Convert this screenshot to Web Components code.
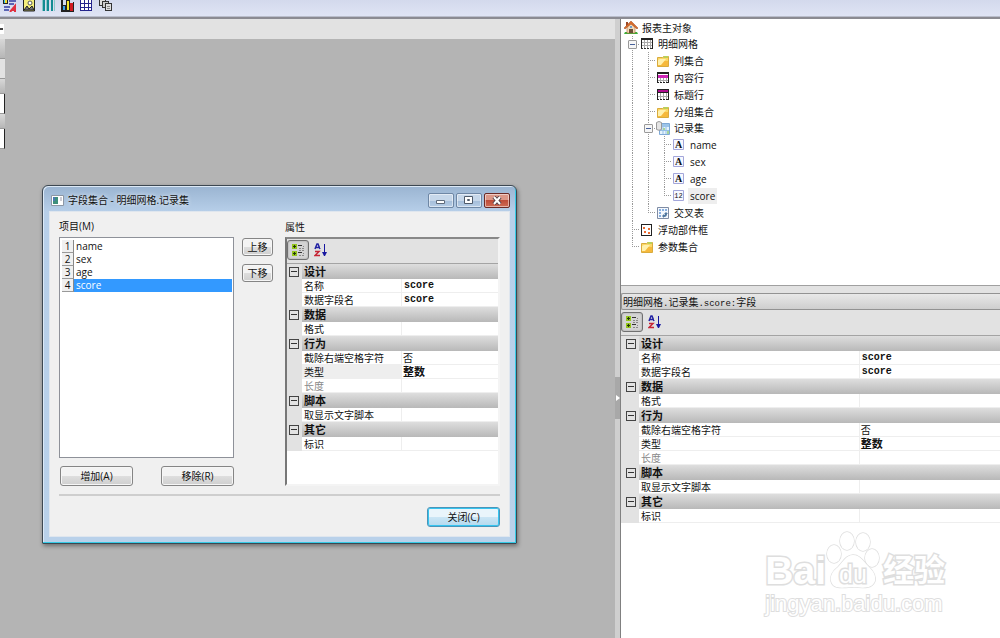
<!DOCTYPE html>
<html lang="zh-CN">
<head>
<meta charset="utf-8">
<title>报表设计器</title>
<style>
  html, body {
    height: 100%;
    margin: 0;
  }
  body {
    font: 10px/14px "Open Sans", "Noto Sans CJK SC", sans-serif;
    color: #111;
    overflow: hidden;
  }
</style>
</head>
<body>
<report-designer>
  <tool-strip slot="toolbar"></tool-strip>
  <design-canvas slot="canvas">
    <app-dialog heading="字段集合 - 明细网格.记录集">
      <item-list slot="items" heading="项目(M)"></item-list>
      <push-button slot="order">上移</push-button>
      <push-button slot="order">下移</push-button>
      <push-button slot="edit" wide>增加(A)</push-button>
      <push-button slot="edit" wide>移除(R)</push-button>
      <property-grid slot="properties" active="类型"></property-grid>
      <push-button slot="footer" wide primary>关闭(C)</push-button>
    </app-dialog>
  </design-canvas>
  <object-tree slot="tree"></object-tree>
  <property-grid slot="properties"></property-grid>
  <site-mark slot="mark"></site-mark>
</report-designer>

<script>
const define = (name, html, setup) => {
  customElements.define(name, class extends HTMLElement {
    connectedCallback() {
      if (this.shadowRoot) return;
      this.attachShadow({ mode: 'open' });
      this.shadowRoot.innerHTML = html;
      if (setup) setup(this, this.shadowRoot);
    }
  });
};

const icons = {
  home: `<svg width="14" height="14" viewBox="0 0 14 14"><path d="M1 11h12l1 2H0z" fill="#3fae3a"/><path d="M3 6l4-4 4 4v6H3z" fill="#f3d9b8" stroke="#a86b3a" stroke-width=".6"/><path d="M2 1h2v4H2z" fill="#9a4a28"/><path d="M0 7l7-7 7 7-1 1-6-5-6 5z" fill="#d96b2c" stroke="#9c4a1c" stroke-width=".5"/><path d="M5 8h4v4H5z" fill="#6d5037"/><path d="M6 5h2v2H6z" fill="#6fa0cc"/></svg>`,
  grid: `<svg width="14" height="14" viewBox="0 0 14 14" shape-rendering="crispEdges"><path d="M1 2h12v10H1z" fill="#fff"/><path d="M1 1h12v2H1zM1 3h1v9H1zM12 3h1v9h-1z" fill="#222"/><path d="M2 5.500h10M2 8.500h10M4.500 3v9M7.500 3v9M10.500 3v9" stroke="#aaa"/><path d="M1 11.500h12" stroke="#333" stroke-dasharray="2 1"/></svg>`,
  folder: `<svg width="14" height="14" viewBox="0 0 14 14"><path d="M1.500 12.500v-9h5l1-1h5v10z" fill="#fbd766" stroke="#d9ab3d"/><path d="M2 12l2-5h8v5z" fill="#f6b93c"/><path d="M4 5h6l-5 6H2V6z" fill="#fff1ad"/><path d="M8 2h4v2H7z" fill="#b9cf5a"/></svg>`,
  content: `<svg width="14" height="14" viewBox="0 0 14 14" shape-rendering="crispEdges"><path d="M1 1h12v11H1z" fill="#fff"/><path d="M1 1h12v2H1zM1 3h1v9H1zM12 3h1v9h-1z" fill="#222"/><path d="M2 4h10v3H2z" fill="#d026b8"/><path d="M2 9.500h10M4.500 7v5M7.500 7v5M10.500 7v5" stroke="#aaa"/><path d="M1 11.500h12" stroke="#222" stroke-dasharray="2 1"/></svg>`,
  title: `<svg width="14" height="14" viewBox="0 0 14 14" shape-rendering="crispEdges"><path d="M1 1h12v11H1z" fill="#fff"/><path d="M1 1h12v1H1zM1 2h1v10H1zM12 2h1v10h-1zM1 4h12v1H1z" fill="#222"/><path d="M2 2h10v2H2z" fill="#b00c91"/><path d="M2 8.500h10M4.500 5v7M7.500 5v7M10.500 5v7" stroke="#aaa"/><path d="M1 11.500h12" stroke="#222" stroke-dasharray="2 1"/></svg>`,
  records: `<svg width="14" height="14" viewBox="0 0 14 14"><path d="M3.500 2.500h10v11h-10z" fill="#e6f3fc" stroke="#7ea9d6"/><path d="M4 3h9v3H4z" fill="#9cc4e8"/><path d="M7 6v7M10 6v7M4 9.500h9" stroke="#94bfe6"/><path d="M7 7h2v2H7zM11 10h2v3h-2z" fill="#a6d49a"/><path d="M.5 1.500q2.500-2 5 0v7q-2.500 1.500-5 0z" fill="#e4e4e4" stroke="#999"/></svg>`,
  text: `<svg width="14" height="14" viewBox="0 0 14 14"><path d="M1.500 1.500h10v10h-10z" fill="#f7f8ff" stroke="#a3a6da"/><text x="6.500" y="10" font-family="Liberation Serif, serif" font-size="10" font-weight="bold" text-anchor="middle" fill="#111">A</text></svg>`,
  number: `<svg width="14" height="14" viewBox="0 0 14 14"><path d="M1.500 1.500h10v10h-10z" fill="#f7f8ff" stroke="#a3a6da"/><text x="6.500" y="9" font-family="Liberation Mono, monospace" font-size="7" text-anchor="middle" fill="#111">12</text></svg>`,
  cross: `<svg width="14" height="14" viewBox="0 0 14 14"><path d="M1.500 1.500h11v11h-11z" fill="#f4f8fd" stroke="#7f8ca4"/><path d="M3 3h2v2H3zM6 3h2v2H6zM9 3h2v2H9zM3 6h2v2H3zM3 9h2v2H3z" fill="#87afe0"/><path d="M10 6l2 2h-1q0 3-3 3v1L6 10l2-2v1q1 0 1-1H8z" fill="#50779f"/></svg>`,
  float: `<svg width="14" height="14" viewBox="0 0 14 14" shape-rendering="crispEdges"><path d="M1.500 1.500h10v11h-10z" fill="#fff" stroke="#222"/><path d="M3 4h2v2H3zM4 8h2v2H4zM8 5h2v2H8zM8 9h2v2H8z" fill="#ee6a2f"/></svg>`,
  categories: `<svg width="14" height="14" viewBox="0 0 14 14" shape-rendering="crispEdges"><path d="M1 1h5v5H1zM1 8h5v5H1z" fill="#93c51c"/><path d="M3 2h1v3H3zM2 3h3v1H2zM3 9h1v3H3zM2 10h3v1H2z" fill="#23350a"/><path d="M7 2h4v1H7zM7 9h4v1H7z" fill="#333"/><path d="M8 5.500h2M11 5.500h2M8 7.500h2M11 7.500h2M8 12.500h2M11 12.500h2M12 3.500h1M12 10.500h1" stroke="#888"/></svg>`,
  sort: `<svg width="14" height="14" viewBox="0 0 14 14"><path d="M1 6l2-5h1l2 5M2 4.500h4" fill="none" stroke="#2424a4" stroke-width="1.500"/><path d="M1 8.500h4l-4 4h5" fill="none" stroke="#c52535" stroke-width="1.500"/><path d="M10 1h1v8h2l-2 4h-1L8 9h2z" fill="#1818a0"/></svg>`
};

// Top strip: the upper rows of its icons are clipped by the window
define('tool-strip', `
  <style>
    :host {
      display: flex;
      gap: 5px;
      padding-left: 3px;
      height: 16px;
      background: linear-gradient(#d3d9ec, #dfe4f4);
      border-bottom: 1px solid #b9bdcb;
    }
    button {
      border: 0;
      padding: 0;
      background: none;
      width: 14px;
      height: 12px;
      line-height: 0;
    }
    svg { display: block; }
    button:last-child { margin-left: 1px; }
  </style>
  <button aria-label="文本"><svg width="14" height="12" shape-rendering="crispEdges"><path d="M0 0h5v4H0z" fill="#222"/><path d="M1 0h1v3H1z" fill="#34c5ee"/><path d="M2 0h2v3H2z" fill="#f3de30"/><path d="M6 1h7M6 4h5M1 7h6M1 10h5" stroke="#5b64b4" stroke-width="2"/><path d="M7 12l5-6v6M9 10h3" fill="none" stroke="#e03040" stroke-width="2" shape-rendering="auto"/></svg></button>
  <button aria-label="图片"><svg width="14" height="12"><path d="M1.500-1v12h11V-1z" fill="#f4ee7c" stroke="#222"/><path d="M2 10l3-4 2 3 3-3 2 4z" fill="#777" stroke="#222"/><circle cx="8" cy="3" r="2" fill="#fff" stroke="#555"/></svg></button>
  <button aria-label="条码"><svg width="14" height="12" shape-rendering="crispEdges"><path d="M3 0v11M7 0v11M11 0v11" stroke="#128a93" stroke-width="2"/><path d="M5 0v11M13 0v11M1 0v11" stroke="#8ac8c8"/></svg></button>
  <button aria-label="图表"><svg width="14" height="12" shape-rendering="crispEdges"><path d="M1 0h2v12H1z" fill="#222"/><path d="M2.500 5.500h3v5h-3z" fill="#38a0ee" stroke="#222"/><path d="M6.500.5h3v10h-3z" fill="#f6e62d" stroke="#222"/><path d="M10 3h3v8h-3z" fill="#d11b22"/><path d="M13 2h1v9h-1zM1 11h13v1H1z" fill="#222"/></svg></button>
  <button aria-label="表格"><svg width="14" height="12" shape-rendering="crispEdges"><path d="M1.500-1v11h11V-1z" fill="#fff" stroke="#24248c"/><path d="M5 0v10M9 0v10M1 3.500h12M1 7.500h12" stroke="#24248c"/></svg></button>
  <button aria-label="子报表"><svg width="14" height="12" shape-rendering="crispEdges"><path d="M.5-1v6h6v-6z" fill="#ddd" stroke="#333"/><path d="M3.500 1.500h6v6h-6z" fill="#ccc" stroke="#333"/><path d="M6.500 3.500h6v7h-6z" fill="#ddd" stroke="#333"/><path d="M8 6.500h3M8 8.500h3" stroke="#888"/></svg></button>
`);

define('design-canvas', `
  <style>
    :host {
      display: flex;
      flex-direction: column;
      position: relative;
      background: #b4b4b4;
    }
    .ruler {
      height: 20px;
      background: #e2e2e2;
      display: flex;
      align-items: center;
    }
    .ruler i {
      width: 3px;
      height: 10px;
      background: linear-gradient(#fff 40%, #444 40% 60%, #fff 60%);
      border-right: 1px solid #fff;
    }
    .bands { width: 5px; }
    .bands div { border-bottom: 1px solid #999; height: 19px; background: #e2e2e2; }
    .bands .head { background: linear-gradient(#d8d8d8, #b6b6b6); height: 14px; }
    .bands .tall { height: 19px; }
    .bands .page { background: #fff; border-right: 1px solid #222; width: 4px; }
  </style>
  <div class="ruler"><i></i></div>
  <div class="bands">
    <div class="head tall"></div><div></div><div class="head"></div><div class="page"></div>
    <div class="head"></div><div class="page"></div>
  </div>
  <slot></slot>
`);

const tree = [
  ['', 'home', '报表主对象'],
  ['m', 'grid', '明细网格'],
  ['|t', 'folder', '列集合'],
  ['|t', 'content', '内容行'],
  ['|t', 'title', '标题行'],
  ['|t', 'folder', '分组集合'],
  ['|m', 'records', '记录集'],
  ['||t', 'text', 'name'],
  ['||t', 'text', 'sex'],
  ['||t', 'text', 'age'],
  ['||e', 'number', 'score'],
  ['|e', 'cross', '交叉表'],
  ['t', 'float', '浮动部件框'],
  ['e', 'folder', '参数集合']
];
const guides = {
  '|': '<i class="line"></i>',
  t: '<i class="line tee"></i>',
  e: '<i class="line tee end"></i>',
  m: '<i class="line tee"><button aria-label="折叠"></button></i>'
};

define('object-tree', `
  <style>
    :host {
      display: block;
      background: #fff;
      padding: 1px 0 0 3px;
      overflow: hidden;
    }
    ul { list-style: none; margin: 0; padding: 0; }
    li { display: flex; height: 17px; align-items: center; }
    li.open { height: 16px; }
    svg { display: block; }
    i {
      width: 16px;
      height: 100%;
      display: flex;
      align-items: center;
      justify-content: center;
      background-repeat: no-repeat;
    }
    .line {
      background-image: repeating-linear-gradient(#999 0 1px, #fff 1px 2px);
      background-size: 1px 100%;
      background-position: 8px 0;
    }
    .tee {
      background-image: repeating-linear-gradient(#999 0 1px, #fff 1px 2px),
        repeating-linear-gradient(90deg, #999 0 1px, #fff 1px 2px);
      background-size: 1px 100%, 8px 1px;
      background-position: 8px 0, 8px 8px;
    }
    .end { background-size: 1px 8px, 8px 1px; }
    button {
      width: 9px;
      height: 9px;
      padding: 0;
      border: 1px solid #999;
      border-radius: 1px;
      background: linear-gradient(#47619b, #47619b) center / 5px 1px no-repeat, #f6f6f6;
    }
    span { margin-left: 2px; padding: 0 2px; line-height: 16px; }
    .current { background: #eee; }
  </style>
  <ul role="tree"></ul>
`, (el, root) => {
  root.querySelector('ul').innerHTML = tree.map(([lines, icon, name]) => `
    <li role="treeitem" class="${lines === '' || lines.endsWith('m') ? 'open' : ''}">
      ${[...lines].map(c => guides[c]).join('')}${icons[icon]}
      <span class="${name === 'score' ? 'current' : ''}">${name}</span>
    </li>`).join('');
});

const properties = [
  ['设计', [['名称', 'score', 'code'], ['数据字段名', 'score', 'code']]],
  ['数据', [['格式', '']]],
  ['行为', [['截除右端空格字符', '否'], ['类型', '整数', 'strong'], ['长度', '', 'off']]],
  ['脚本', [['取显示文字脚本', '']]],
  ['其它', [['标识', '']]]
];

define('property-grid', `
  <style>
    :host { display: block; background: #fff; font-family: "Noto Sans CJK SC", sans-serif; }
    .tools {
      display: flex;
      gap: 1px;
      height: 24px;
      padding-top: 1px;
      box-sizing: border-box;
      background: #e2e2e2;
    }
    .tools button {
      display: flex;
      align-items: center;
      justify-content: center;
      width: 22px;
      height: 20px;
      padding: 0;
      border: 1px solid transparent;
      border-radius: 3px;
      background: none;
    }
    .tools svg { flex: none; }
    .tools .on { border-color: #707070; background: #d4d4d4; box-shadow: inset 0 0 2px #999; }
    table {
      width: 100%;
      table-layout: fixed;
      border-collapse: separate;
      border-spacing: 0;
      border-top: 1px solid #a4a4a4;
    }
    .gutter { width: var(--gutter, 18px); }
    .name { width: var(--name-width, 58%); }
    td, th { padding: 0 0 0 2px; height: 14px; line-height: 13px; text-align: left; white-space: nowrap; }
    td { border-bottom: 1px solid #eee; box-sizing: border-box; }
    td + td + td { border-left: 1px solid #eee; padding-left: 1px; }
    th { height: 15px; line-height: 15px; font-size: 11px; background: linear-gradient(#dedede, #b8b8b8); }
    td:first-child { background: #e2e2e2; border-color: #e2e2e2; }
    .fold { background: #e2e2e2; padding: 0 3px 0 0; }
    .fold button {
      display: block;
      width: 10px;
      height: 10px;
      margin-left: auto;
      padding: 0;
      border: 1px solid #444;
      background: linear-gradient(#333, #333) center / 6px 1px no-repeat;
    }
    td.code { font: bold 10px/13px "Liberation Mono", monospace; padding-left: 2px; }
    .strong { font-weight: bold; font-size: 11px; }
    .off { color: #888; }
    .active { background: #eee; }
  </style>
  <div class="tools">
    <button class="on" aria-label="按分类排序">${icons.categories}</button>
    <button aria-label="按字母排序">${icons.sort}</button>
  </div>
  <table>
    <colgroup><col class="gutter"><col class="name"><col></colgroup>
    <tbody></tbody>
  </table>
`, (el, root) => {
  const active = el.getAttribute('active');
  root.querySelector('tbody').innerHTML = properties.map(([group, rows]) => `
    <tr><th class="fold"><button aria-label="折叠"></button></th><th colspan="2">${group}</th></tr>
    ${rows.map(([name, value, kind = '']) => `
      <tr><td></td><td class="${name === active ? 'active' : ''} ${kind === 'off' ? 'off' : ''}">${name}</td><td class="${kind}">${value}</td></tr>
    `).join('')}`).join('');
});

define('push-button', `
  <style>
    :host { display: block; width: 31px; }
    :host([wide]) { width: 73px; }
    button {
      display: block;
      width: 100%;
      height: 18px;
      padding: 0;
      font: inherit;
      line-height: 16px;
      color: #111;
      border: 1px solid #858585;
      border-radius: 3px;
      background: linear-gradient(#f3f3f3 50%, #dedede 50%, #cfcfcf);
      box-shadow: inset 0 0 0 1px #f6f6f6;
    }
    :host([wide]) button { height: 20px; line-height: 18px; }
    :host([primary]) button {
      border-color: #4b94b8;
      background: linear-gradient(#e9f5fb 50%, #cbe6f5 50%, #b3d9ee);
      box-shadow: inset 0 0 0 1px #35c4ef;
    }
  </style>
  <button><slot></slot></button>
`);

define('item-list', `
  <style>
    :host { display: flex; flex-direction: column; }
    span { height: 20px; line-height: 18px; }
    ul {
      flex: 1;
      list-style: none;
      margin: 0;
      padding: 2px 1px 2px 2px;
      border: 1px solid #8e9199;
      background: #fff;
    }
    li { display: flex; height: 13px; line-height: 13px; }
    b {
      width: 12px;
      box-sizing: border-box;
      font-weight: normal;
      text-align: center;
      color: #111;
      background: #f0f0f0;
      border-right: 1px solid #888;
      border-bottom: 1px solid #999;
      line-height: 12px;
    }
    em { flex: 1; font-style: normal; padding-left: 2px; }
    [aria-selected=true] em { background: #3399ff; color: #fff; }
  </style>
  <span id="label"></span>
  <ul role="listbox" aria-labelledby="label" tabindex="0"></ul>
`, (el, root) => {
  root.getElementById('label').textContent = el.getAttribute('heading');
  root.querySelector('ul').innerHTML = ['name', 'sex', 'age', 'score'].map((name, i) =>
    `<li role="option" aria-selected="${name === 'score'}"><b>${i + 1}</b><em>${name}</em></li>`).join('');
});

define('app-dialog', `
  <style>
    :host {
      position: absolute;
      left: 42px;
      top: 166px;
      width: 475px;
      box-sizing: border-box;
      padding: 0 6px 6px;
      border: 1px solid #3d4852;
      border-radius: 6px 6px 1px 1px;
      background: linear-gradient(#9ab4d1, #b7cfe9 26px, #b9d1ea);
      box-shadow: inset -1px -1px #35cbe6, inset 1px 1px #dce9f6, 1px 2px 4px rgba(0, 0, 0, .4);
    }
    header { display: flex; height: 25px; }
    header > svg { margin: 9px 4px 0 2px; }
    h1 { flex: 1; margin: 0; font: inherit; line-height: 29px; text-shadow: 0 0 4px #fff; }
    header button {
      width: 26px;
      height: 15px;
      margin: 7px 0 0 2px;
      padding: 0;
      border: 1px solid #6e87a5;
      border-radius: 2px;
      background: linear-gradient(#c6d7ea 50%, #a4bdd9 50%, #b6cde6);
      box-shadow: inset 0 0 0 1px rgba(255, 255, 255, .5);
      line-height: 0;
    }
    header .close {
      border-color: #6b2a26;
      background: linear-gradient(#dc9788 45%, #bd4936 45%, #cf6c55);
    }
    .body {
      background: #f0f0f0;
      border: 1px solid #dfe6ee;
      padding: 5px 9px 9px;
      display: grid;
      grid-template-columns: 175px 31px 1fr;
      column-gap: 8px;
    }
    .left { display: flex; flex-direction: column; }
    ::slotted(item-list) { height: 241px; }
    .edit { display: flex; justify-content: space-between; padding: 8px 0 8px 1px; }
    .order { display: flex; flex-direction: column; gap: 8px; padding-top: 21px; }
    .props { padding-left: 4px; }
    .props span { display: block; height: 20px; line-height: 20px; }
    ::slotted(property-grid) {
      height: 245px;
      border-top: 2px solid #888;
      border-left: 2px solid #777;
      border-right: 2px solid #f4f4f4;
      border-bottom: 2px solid #f4f4f4;
      --gutter: 15px;
      --name-width: 99px;
    }
    footer {
      grid-column: 1 / -1;
      display: flex;
      justify-content: flex-end;
      border-top: 2px solid #cecece;
      padding-top: 11px;
    }
  </style>
  <header>
    <svg width="13" height="11"><path d="M.5.500h12v10H.5z" fill="#fff" stroke="#8d97a5"/><path d="M2 2h5v7H2z" fill="#3e8f7c"/><path d="M2 2h2v4H2z" fill="#4b77b3"/><path d="M9 3h2M9 5h2" stroke="#99a"/></svg>
    <h1></h1>
    <button aria-label="最小化"><svg width="12" height="9"><path d="M1.500 4.500h8v3h-8z" fill="#fff" stroke="#5e6a7a"/></svg></button>
    <button aria-label="最大化"><svg width="12" height="9"><path d="M1.500.5h8v7h-8z" fill="#fff" stroke="#4e5a6a"/><path d="M4.500 3.500h2v1h-2z" fill="none" stroke="#4e5a6a"/></svg></button>
    <button class="close" aria-label="关闭"><svg width="12" height="9"><path d="M3 1l6 7M9 1L3 8" stroke="#524048" stroke-width="4"/><path d="M3 1l6 7M9 1L3 8" stroke="#fff" stroke-width="2"/></svg></button>
  </header>
  <div class="body">
    <div class="left">
      <slot name="items"></slot>
      <div class="edit"><slot name="edit"></slot></div>
    </div>
    <div class="order"><slot name="order"></slot></div>
    <div class="props"><span>属性</span><slot name="properties"></slot></div>
    <footer><slot name="footer"></slot></footer>
  </div>
`, (el, root) => {
  root.querySelector('h1').textContent = el.getAttribute('heading');
});

define('site-mark', `
  <style>
    :host {
      display: block;
      width: max-content;
      font-family: "Liberation Sans", "Noto Sans CJK SC", sans-serif;
      color: #fff;
      -webkit-text-stroke: 3px #dedede;
      paint-order: stroke;
    }
    .logo { display: flex; align-items: flex-end; height: 60px; }
    b { font-size: 39px; line-height: 42px; height: 41px; }
    .cn { font-size: 31px; line-height: 34px; height: 37px; margin-left: 3px; }
    p { margin: 0; font-size: 22px; line-height: 26px; -webkit-text-stroke-width: 2px; }
    svg { display: block; }
    text { -webkit-text-stroke-width: 0; }
  </style>
  <div class="logo">
    <b>Bai</b>
    <svg width="54" height="60" viewBox="0 0 54 60" fill="#fff" stroke="#dedede" stroke-width="1.500">
      <ellipse cx="8" cy="23" rx="7" ry="9"/><ellipse cx="21" cy="10" rx="7" ry="9"/>
      <ellipse cx="37" cy="11" rx="7" ry="9"/><ellipse cx="46" cy="27" rx="7" ry="9"/>
      <path d="M27 24c-7 0-10 7-15 12-5 4-8 8-7 14 2 8 10 7 21 6 12 1 20 2 23-6 1-6-2-10-6-14-6-6-9-12-16-12z"/>
      <text x="27" y="52" font-size="25" text-anchor="middle" stroke-width="3">du</text>
    </svg>
    <b class="cn">经验</b>
  </div>
  <p>jingyan.baidu.com</p>
`);

define('report-designer', `
  <style>
    :host { display: flex; flex-direction: column; height: 100vh; }
    main {
      flex: 1;
      min-height: 0;
      display: grid;
      grid-template-columns: 1fr 5px 38%;
      border-top: 2px solid #8b8b92;
    }
    .split {
      background: #cfcfcf;
      display: flex;
      flex-direction: column;
      justify-content: center;
    }
    .split button {
      height: 42px;
      margin-top: 138px;
      border: 0;
      padding: 0;
      background: #a8a8a8;
      line-height: 0;
    }
    aside {
      display: flex;
      flex-direction: column;
      min-width: 0;
      background: #fff;
      border-left: 1px solid #808080;
    }
    ::slotted(object-tree) { height: 267px; box-sizing: border-box; border-bottom: 1px solid #a0a0a0; }
    h2 {
      margin: 0;
      height: 15px;
      font: 10px/15px "Noto Sans CJK SC", sans-serif;
      border: 1px solid #929292;
      border-width: 1px 0 1px 1px;
      border-radius: 2px 0 0 2px;
      padding-left: 1px;
      background: linear-gradient(#e8e8e8, #cecece);
    }
    h2 span { font: 9px/15px "Liberation Mono", monospace; }
    .bar { padding: 7px 0 1px; background: #e2e2e2; }
    ::slotted(site-mark) { margin: 8px 55px 0 auto; }
  </style>
  <slot name="toolbar"></slot>
  <main>
    <slot name="canvas"></slot>
    <div class="split"><button aria-label="折叠面板"><svg width="5" height="8"><path d="M1 1l4 3-4 3z" fill="#fff"/></svg></button></div>
    <aside>
      <slot name="tree"></slot>
      <div class="bar"><h2>明细网格<span>.</span>记录集<span>.score:</span>字段</h2></div>
      <slot name="properties"></slot>
      <slot name="mark"></slot>
    </aside>
  </main>
`);
</script>
</body>
</html>
